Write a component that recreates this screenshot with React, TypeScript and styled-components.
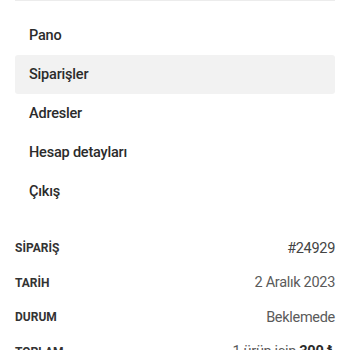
import React from "react";
import styled, { createGlobalStyle } from "styled-components";

const Global = createGlobalStyle`
  html, body { margin: 0; padding: 0; background: #fff; }
  body { font-family: Roboto, "Open Sans", sans-serif; color: #333; }
`;

const Page = styled.div`
  padding: 0 15px;
`;

const Nav = styled.ul`
  list-style: none;
  margin: 0;
  padding: 15px 0 0;
  border-top: 1px solid #ececec;
  display: flex;
  flex-direction: column;
`;

const NavItem = styled.li<{ $active?: boolean }>`
  height: 39px;
  display: flex;
  align-items: center;
  padding: 0 14px;
  border-radius: 3px;
  background: ${(p) => (p.$active ? "#f2f2f2" : "transparent")};
  font-size: 14.5px;
  font-weight: 500;
  letter-spacing: -0.2px;
  color: #2b2b2b;
`;

const Table = styled.div`
  margin-top: 20px;
  display: flex;
  flex-direction: column;
`;

const Row = styled.div`
  height: 34.5px;
  display: flex;
  align-items: center;
  justify-content: space-between;
`;

const Label = styled.span`
  font-size: 12px;
  font-weight: 700;
  color: #333;
`;

const Value = styled.span<{ $dark?: boolean }>`
  font-size: 14.5px;
  font-weight: 400;
  letter-spacing: -0.3px;
  color: ${(p) => (p.$dark ? "#444" : "#5a5a5a")};
`;

const Strong = styled.strong`
  font-weight: 700;
  color: #2b2b2b;
`;

const items = ["Pano", "Siparişler", "Adresler", "Hesap detayları", "Çıkış"];

export default function App() {
  return (
    <Page>
      <Global />
      <Nav>
        {items.map((t) => (
          <NavItem key={t} $active={t === "Siparişler"}>
            {t}
          </NavItem>
        ))}
      </Nav>
      <Table>
        <Row>
          <Label>SİPARİŞ</Label>
          <Value $dark>#24929</Value>
        </Row>
        <Row>
          <Label>TARİH</Label>
          <Value>2 Aralık 2023</Value>
        </Row>
        <Row>
          <Label>DURUM</Label>
          <Value>Beklemede</Value>
        </Row>
        <Row>
          <Label>TOPLAM</Label>
          <Value>
            1 ürün için <Strong>300 ₺</Strong>
          </Value>
        </Row>
      </Table>
    </Page>
  );
}
